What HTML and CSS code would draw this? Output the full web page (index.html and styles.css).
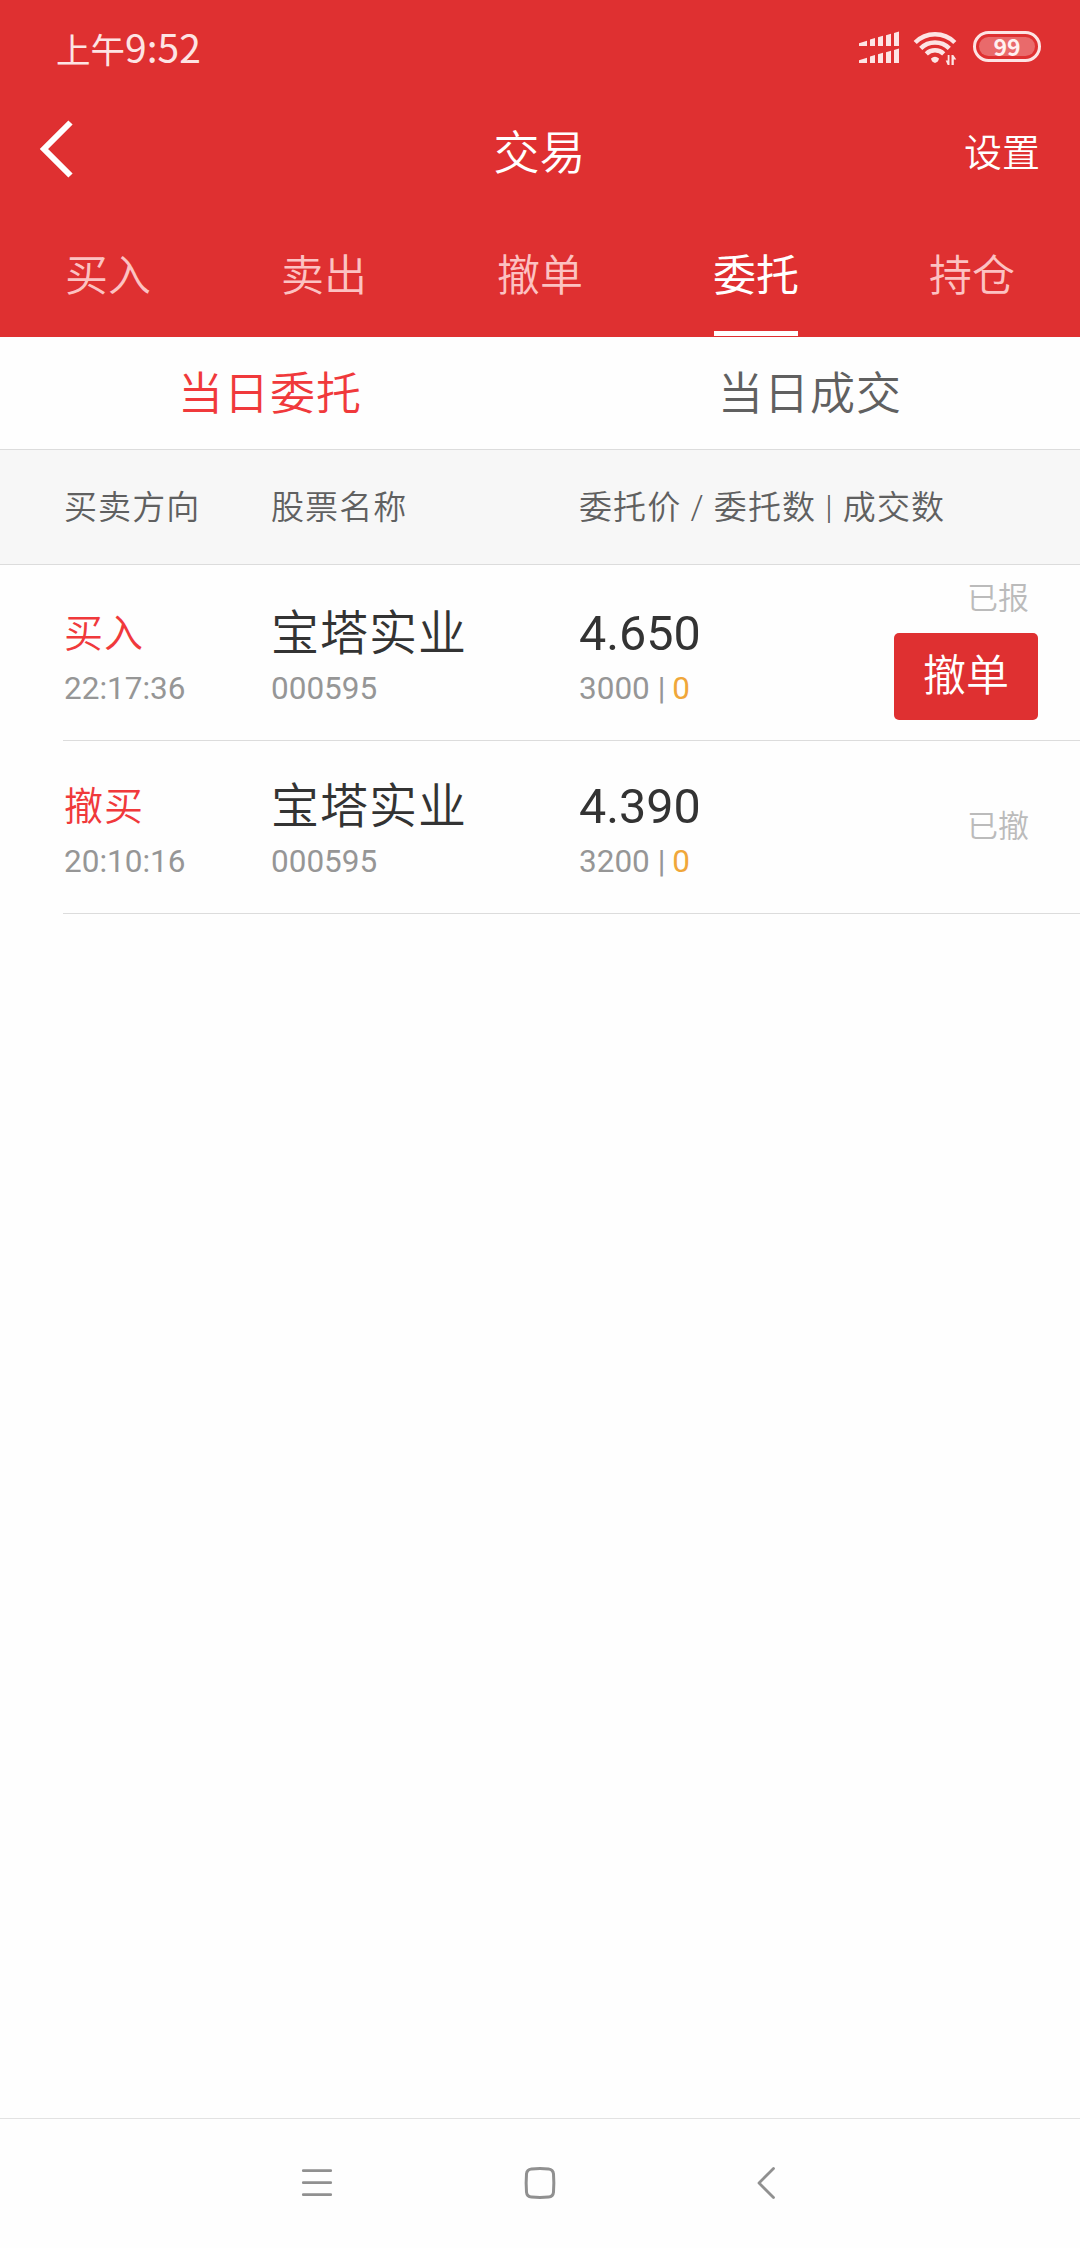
FILE: index.html
```
<!DOCTYPE html>
<html lang="zh-CN">
<head>
	<title>交易</title>
	<meta charset="utf-8">
	<link rel="stylesheet" href="styles.css">
</head>
<body>
<div class="header">
	<div class="status">
		<div class="time">上午<span>9:52</span></div>
		<div class="icons">
			<svg class="signal" width="42" height="34" viewBox="0 0 42 34" fill="#fde4e4">
				<path d="M1 12.2l8-2.4v5.2h-8zM12 8.6l5-1.5v7.9h-5zM20 6.2l5-1.5v10.3h-5zM28 4.2l5-1.5v12.3h-5zM36 2l5-1.5v14.500h-5z"/>
				<path d="M1 29.200l8-2.400v5.200h-8zM12 25.600l5-1.500v7.900h-5zM20 23.200l5-1.500v10.300h-5zM28 21.200l5-1.500v12.300h-5zM36 19l5-1.500v14.500h-5z"/>
			</svg>
			<svg class="wifi" width="44" height="34" viewBox="0 0 44 34">
				<g fill="none" stroke="#fde4e4" stroke-width="4.500">
					<path d="M2.200 11.500a28 28 0 0 1 39.600 0"/>
					<path d="M7.700 17.300a20.500 20.500 0 0 1 28.600 0"/>
					<path d="M13.300 22.800a12.500 12.500 0 0 1 17.400 0"/>
				</g>
				<path d="M18 27.500q4-3.400 8 0q-.5 3.500-4 4.500q-3.500-1-4-4.500z" fill="#fde4e4"/>
				<path d="M36.500 24v10h-1.800l-2-4.500h2v-5.500zM38.500 34v-10h1.800l3 4.500h-2.500v5.500z" fill="#fde4e4"/>
			</svg>
			<div class="battery"><span>99</span></div>
		</div>
	</div>
	<div class="title">
		<svg class="back" width="34" height="58" viewBox="0 0 34 58" fill="none" stroke="#fff" stroke-width="6">
			<path d="M31.500 2.500L5 29l26.500 26.500"/>
		</svg>
		<h1>交易</h1>
		<a class="setting">设置</a>
	</div>
	<div class="nav">
		<a>买入</a>
		<a>卖出</a>
		<a>撤单</a>
		<a class="active">委托</a>
		<a>持仓</a>
	</div>
</div>
<div class="tabs">
	<a class="active">当日委托</a>
	<a>当日成交</a>
</div>
<div class="row thead">
	<div>买卖方向</div>
	<div>股票名称</div>
	<div>委托价 / 委托数 | 成交数</div>
</div>
<div class="list">
	<div class="row item">
		<div>
			<p class="side">买入</p>
			<p class="sub">22:17:36</p>
		</div>
		<div>
			<p class="name">宝塔实业</p>
			<p class="sub">000595</p>
		</div>
		<div>
			<p class="price">4.650</p>
			<p class="sub">3000 | <em>0</em></p>
		</div>
		<div class="state">
			<span>已报</span>
			<button class="btn">撤单</button>
		</div>
	</div>
	<div class="row item">
		<div>
			<p class="side">撤买</p>
			<p class="sub">20:10:16</p>
		</div>
		<div>
			<p class="name">宝塔实业</p>
			<p class="sub">000595</p>
		</div>
		<div>
			<p class="price">4.390</p>
			<p class="sub">3200 | <em>0</em></p>
		</div>
		<div class="state done">
			<span>已撤</span>
		</div>
	</div>
</div>
<div class="bottom">
	<svg width="34" height="34" viewBox="0 0 34 34" fill="none" stroke="#909090" stroke-width="2.800" stroke-linecap="round">
		<path d="M3.300 4.700h27.400M3.300 16.700h27.400M3.300 28.700h27.400"/>
	</svg>
	<svg width="34" height="34" viewBox="0 0 34 34" fill="none" stroke="#909090" stroke-width="3">
		<path d="M8.500 2.900q8.500-.9 17 0q4.600.5 5 5q.7 9.100 0 18.200q-.4 4.500-5 5q-8.500.9-17 0q-4.600-.5-5-5q-.7-9.100 0-18.200q.4-4.500 5-5z"/>
	</svg>
	<svg width="34" height="34" viewBox="0 0 34 34" fill="none" stroke="#909090" stroke-width="2.800" stroke-linecap="round" stroke-linejoin="round">
		<path d="M27.500 2.500L13 17l14.500 14.500"/>
	</svg>
</div>
</body>
</html>
```
FILE: styles.css
```
* {
	margin: 0;
	padding: 0;
	box-sizing: border-box;
}
body {
	display: flex;
	flex-direction: column;
	height: 2248px;
	background: #fefefe;
	font-family: Roboto, "Noto Sans CJK SC", sans-serif;
	font-weight: 350;
	color: #333;
}
.header {
	height: 337px;
	background: #df3031;
	color: #fff;
}
.status {
	display: flex;
	justify-content: space-between;
	height: 98px;
	padding: 31px 39px 0 56px;
	color: #fde4e4;
}
.time {
	margin-top: -3px;
	font-family: "Noto Sans CJK SC", sans-serif;
	font-size: 34.500px;
	line-height: 36px;
	font-weight: 400;
}
.time span {
	font-size: 39px;
}
.icons {
	display: flex;
}
.wifi {
	margin: 0 16px 0 13px;
}
.battery {
	width: 68px;
	height: 31px;
	padding: 3px;
	border: 3px solid #fde4e4;
	border-radius: 16px;
}
.battery span {
	display: block;
	height: 19px;
	border-radius: 10px;
	background: #e96a6b;
	color: #fff0f0;
	font: bold 23px/18px "Noto Sans CJK SC", sans-serif;
	text-align: center;
}
.title {
	display: flex;
	justify-content: space-between;
	align-items: center;
	height: 102px;
	padding: 0 40px 0 39px;
}
.back {
	margin-right: 42px;
}
.title h1 {
	font-size: 46px;
	font-weight: 350;
}
.setting {
	font-size: 38px;
}
.nav {
	display: flex;
	height: 137px;
}
.nav a {
	display: flex;
	flex-direction: column;
	align-items: center;
	flex: 1;
	padding-top: 45px;
	font-size: 43px;
	line-height: 62px;
	color: #fcc2c2;
}
.nav .active {
	color: #fff;
	font-weight: 400;
}
.nav .active::after {
	content: "";
	width: 84px;
	height: 5px;
	margin-top: 24px;
	background: #fff;
}
.tabs {
	display: flex;
	height: 113px;
	border-bottom: 1px solid #dcdcdc;
}
.tabs a {
	flex: 1;
	padding-top: 3px;
	text-align: center;
	font-size: 45px;
	line-height: 109px;
	letter-spacing: 1px;
	color: #606060;
}
.tabs .active {
	color: #f0393b;
}
.row {
	display: grid;
	grid-template-columns: 207px 308px 1fr 144px;
}
.thead {
	grid-template-columns: 207px 308px 1fr;
	height: 115px;
	padding-left: 64px;
	border-bottom: 1px solid #dcdcdc;
	background: #f7f7f7;
	font-size: 33px;
	line-height: 116px;
	letter-spacing: 1.100px;
	color: #606060;
}
.list {
	flex: 1;
	padding: 3px 0 0 63px;
}
.item {
	height: 173px;
	padding: 0 42px 0 1px;
	border-bottom: 1px solid #dcdcdc;
}
.item p {
	height: 60px;
	line-height: 60px;
	white-space: nowrap;
}
.item p:first-child {
	margin-top: 36px;
}
.item .side {
	font-size: 39px;
	letter-spacing: 1px;
	color: #f0393b;
}
.item .name {
	font-size: 48px;
	letter-spacing: 1px;
}
.item .price {
	font-size: 48.500px;
	font-weight: 400;
}
.item .sub {
	height: 50px;
	line-height: 50px;
	font-size: 31.500px;
	font-weight: 400;
	color: #969696;
}
.sub em {
	margin-left: -1px;
	font-style: normal;
	color: #f0a73a;
}
.state {
	padding-top: 9px;
	font-size: 31px;
	line-height: 44px;
	color: #bbb;
}
.state span {
	display: block;
	padding-right: 9px;
	text-align: right;
}
.done {
	padding-top: 64px;
}
.btn {
	display: block;
	width: 144px;
	height: 87px;
	margin-top: 12px;
	border: 0;
	border-radius: 5px;
	background: #df3031;
	color: #fff;
	font: 350 43px/87px Roboto, "Noto Sans CJK SC", sans-serif;
}
.bottom {
	display: flex;
	justify-content: center;
	gap: 189px;
	height: 130px;
	padding-top: 47px;
	border-top: 1px solid #e2e2e2;
}
```
